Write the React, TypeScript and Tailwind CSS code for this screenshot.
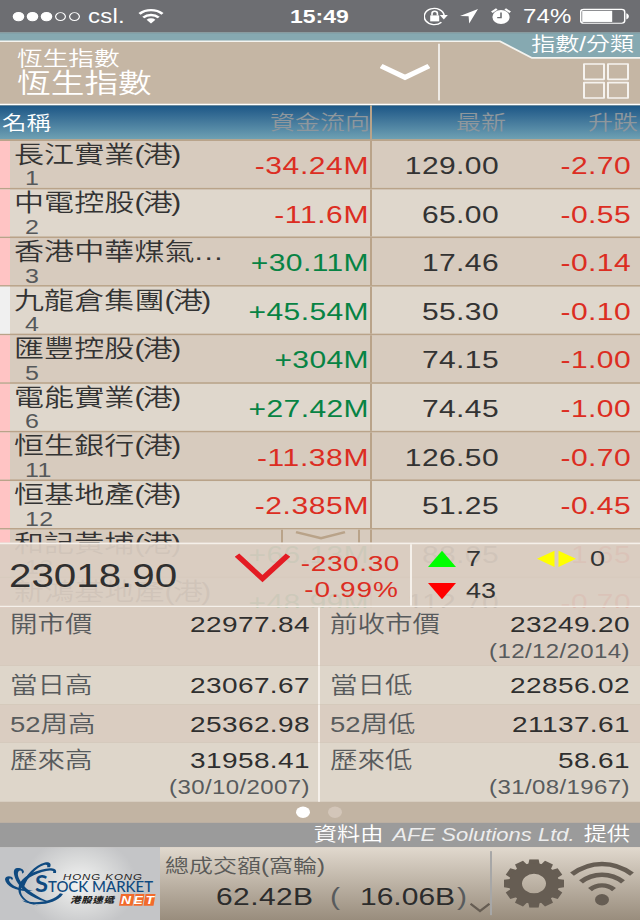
import clsx from 'clsx';

type Stock = {
  name: string;
  suffix: string;
  code: string;
  flow: string;
  last: string;
  change: string;
  plain?: boolean;
};

const stocks: Stock[] = [
  { name: '長江實業', suffix: '(港)', code: '1', flow: '-34.24M', last: '129.00', change: '-2.70' },
  { name: '中電控股', suffix: '(港)', code: '2', flow: '-11.6M', last: '65.00', change: '-0.55' },
  { name: '香港中華煤氣', suffix: '...', code: '3', flow: '+30.11M', last: '17.46', change: '-0.14' },
  { name: '九龍倉集團', suffix: '(港)', code: '4', flow: '+45.54M', last: '55.30', change: '-0.10', plain: true },
  { name: '匯豐控股', suffix: '(港)', code: '5', flow: '+304M', last: '74.15', change: '-1.00' },
  { name: '電能實業', suffix: '(港)', code: '6', flow: '+27.42M', last: '74.45', change: '-1.00' },
  { name: '恒生銀行', suffix: '(港)', code: '11', flow: '-11.38M', last: '126.50', change: '-0.70' },
  { name: '恒基地產', suffix: '(港)', code: '12', flow: '-2.385M', last: '51.25', change: '-0.45' },
  { name: '和記黃埔', suffix: '(港)', code: '13', flow: '+66.13M', last: '88.05', change: '-1.65' },
  { name: '新鴻基地產', suffix: '(港)', code: '16', flow: '+48.99M', last: '112.70', change: '-0.70' },
];

const stats = [
  { h: 'h-[72px] pt-[7px]', bg: 'bg-[#dacdc1]', left: ['開市價', '22977.84'], right: ['前收市價', '23249.20', '(12/12/2014)'] },
  { h: 'h-[48px] pt-[11px]', bg: 'bg-[#ded6ca]', left: ['當日高', '23067.67'], right: ['當日低', '22856.02'] },
  { h: 'h-[47px] pt-[11px]', bg: 'bg-[#dacdc1]', left: ['52周高', '25362.98'], right: ['52周低', '21137.61'] },
  { h: 'h-[73px] pt-[8px]', bg: 'bg-[#ded6ca]', left: ['歷來高', '31958.41', '(30/10/2007)'], right: ['歷來低', '58.61', '(31/08/1967)'] },
];

const StatusBar = () => (
  <div className="flex h-10 items-center bg-[#6d6e72] text-[24px] leading-none text-white">
    <svg className="ml-3 h-5 w-[70px]" viewBox="0 0 70 20" fill="none" stroke="#fff" strokeWidth="1.2">
      <circle cx="6.5" cy="10.5" r="5.2" fill="#fff" />
      <circle cx="20.5" cy="10.5" r="5.2" fill="#fff" />
      <circle cx="34.5" cy="10.5" r="5.2" fill="#fff" />
      <circle cx="48.5" cy="10.5" r="4.9" />
      <circle cx="62.5" cy="10.5" r="4.9" />
    </svg>
    <span className="ml-[6px] mt-[2px] w-[38px] tracking-[0.2px]">csl.</span>
    <svg className="ml-[12px] h-5 w-[26px]" viewBox="0 0 26 20" fill="none" stroke="#fff" strokeWidth="3">
      <path d="M1.5 7.2a16.5 16.5 0 0 1 23 0" />
      <path d="M5.3 11.6a11 11 0 0 1 15.4 0" />
      <path d="M13 19l-4.4-4.6a6.3 6.3 0 0 1 8.8 0z" fill="#fff" stroke="none" />
    </svg>
    <span className="ml-[126px] mt-[2px] w-[60px] text-[23px] font-bold">15:49</span>
    <svg className="ml-[74px] h-[26px] w-[24px]" viewBox="0 0 24 26" fill="none" stroke="#fff" strokeWidth="1.6">
      <path d="M17.4 20.4a10 10 0 1 1 2.8-8.2" />
      <path d="M15.8 11.5h8l-4 5.5z" fill="#fff" stroke="none" />
      <rect x="6.2" y="12" width="9" height="7.4" fill="#fff" stroke="none" />
      <path d="M8 12v-2.4a2.7 2.7 0 0 1 5.4 0V12" />
    </svg>
    <svg className="ml-[12px] h-5 w-[18px]" viewBox="0 0 18 20">
      <path d="M18 1L0 9.8l8.6.4L9.2 19z" fill="#fff" />
    </svg>
    <svg className="ml-[13px] h-[22px] w-[20px]" viewBox="0 0 20 22">
      <circle cx="10" cy="12" r="8.6" fill="#fff" />
      <path d="M.8 6.2l5-4.2M19.2 6.2l-5-4.2" stroke="#fff" strokeWidth="2.4" />
      <path d="M10 6.5V12.8H6.2" stroke="#6d6e72" strokeWidth="1.6" fill="none" />
    </svg>
    <span className="ml-[12px] mt-[2px] w-[50px] tracking-[0.2px]">74%</span>
    <svg className="ml-[7px] h-[20px] w-[50px]" viewBox="0 0 50 20">
      <rect x=".7" y="1.7" width="44" height="17" rx="3" fill="none" stroke="#fff" strokeWidth="1.5" />
      <rect x="2.2" y="3.3" width="30" height="13.8" fill="#fff" />
      <path d="M46.3 6.5c3.4 1 3.4 6.5 0 7.5z" fill="#fff" />
    </svg>
  </div>
);

const Header = () => (
  <div className="relative h-[90px] bg-[#86a9b1] text-white">
    <svg className="absolute inset-0 h-[90px] w-[640px]" viewBox="0 0 640 90" fill="none" stroke="#fff">
      <path d="M0 11h500l32 20.5h108V90H0z" fill="#c5b6a4" stroke="none" />
      <path d="M0 11h500l32 20.5h108" strokeWidth="2" stroke="#f4f4f0" />
      <path d="M0 .5h640" stroke="#7a9299" />
      <path d="M0 89h640" strokeWidth="2" />
    </svg>
    <div className="relative flex h-full">
      <div className="flex w-[380px] shrink-0 flex-col pl-[17px] pt-[20px] leading-none">
        <span className="text-[25.7px]">恆生指數</span>
        <span className="mt-px text-[33.7px]">恆生指數</span>
      </div>
      <svg className="mt-[38px] h-[24px] w-[50px]" viewBox="0 0 50 24" fill="none" stroke="#fff" strokeWidth="6">
        <path d="M1 3.5L25 17.5L49 3.5" />
      </svg>
      <div className="ml-2 mt-[14px] h-[70px] w-[2px] bg-[#efebe6]" />
      <div className="flex flex-1 flex-col items-end">
        <span className="mr-[6px] mt-[3px] text-[24px] leading-none">指數/分類</span>
        <div className="mr-[11px] mt-[11px] grid grid-cols-2 gap-[2px]">
          {[0, 1, 2, 3].map((i) => (
            <div key={i} className="h-[21px] w-[22px] rounded-[1px] border-2 border-[#f6f3ef]" />
          ))}
        </div>
      </div>
    </div>
  </div>
);

const TableHead = () => (
  <div className="flex h-[42px] items-center bg-linear-to-b from-[#1b5686] to-[#6fa1b3] text-[25px] leading-none text-[#8e979d]">
    <span className="mt-[3px] w-[171px] pl-[2px] text-[24.5px] text-white">名稱</span>
    <span className="flex w-[201px] items-center justify-end self-stretch border-r-2 border-[#b9a389] pt-[3px]">
      資金流向
    </span>
    <span className="mt-[3px] w-[134px] text-right">最新</span>
    <span className="mt-[3px] w-[132px] text-right">升跌</span>
  </div>
);

const StockRow = ({ stock, odd }: { stock: Stock; odd: boolean }) => {
  const falling = stock.flow.startsWith('-');
  return (
    <div
      className={clsx(
        'flex h-[60px] shrink-0 items-center border-b-2 border-[#b9a389] text-[30px] leading-none tracking-[0.4px]',
        odd ? 'bg-[#d7cbbe]' : 'bg-[#dfd7cc]',
      )}
    >
      <div className={clsx('w-[10px] self-stretch', stock.plain ? 'bg-[#f0f0f0]' : 'bg-[#ffc4c4]')} />
      <div className="w-[225px] self-stretch pl-[4px] pt-[2px] text-[#333]">
        <div className="whitespace-nowrap tracking-[0.1px]">
          {stock.name}
          <span className={stock.suffix === '...' ? 'tracking-[1.5px]' : 'tracking-[-1.6px]'}>{stock.suffix}</span>
        </div>
        <div className="mt-[2px] pl-[11px] text-[25px] leading-[24px] text-[#55585a]">{stock.code}</div>
      </div>
      <div
        className={clsx(
          'flex w-[137px] items-center justify-end self-stretch border-r-2 border-[#b9a389] pr-px pt-[3px]',
          falling ? 'tracking-[0.6px] text-[#dc2d22]' : 'text-[#078344]',
        )}
      >
        {stock.flow}
      </div>
      <div className="mt-[3px] w-[127px] text-right text-[#333]">{stock.last}</div>
      <div className="mt-[3px] w-[132px] text-right text-[#dc2d22]">{stock.change}</div>
    </div>
  );
};

const IndexPanel = () => (
  <div className="absolute inset-x-0 bottom-0 flex h-[80px] border-y-2 border-[#f5f0ea] bg-[#dacdc1]/94 leading-none">
    <div className="flex w-[235px] items-center pl-[9px] pt-[5px] text-[40.3px] text-[#2f2f2f]">23018.90</div>
    <svg className="mt-[10px] h-[40px] w-[55px]" viewBox="0 0 55 40" fill="none" stroke="#e31b23" strokeWidth="6">
      <path d="M2 3.5L27.5 32.5L53 3.5" />
    </svg>
    <div className="flex w-[120px] flex-col items-end pr-[10px] pt-[10px] text-[28px] tracking-[0.6px] text-[#dc2d22]">
      <span>-230.30</span>
      <span className="mr-px mt-[4px] tracking-[1px]">-0.99%</span>
    </div>
    <div className="flex flex-1 border-l-2 border-[#f5f0ea] pt-[2px] text-[27px] text-[#333]">
      <div className="flex w-[125px] flex-col gap-[8px] pl-[16px]">
        <div className="flex h-[32px] items-center gap-[10px]">
          <svg className="h-[20px] w-[28px]" viewBox="0 0 28 20">
            <path d="M14 0L28 20H0z" fill="#0f0" />
          </svg>
          7
        </div>
        <div className="flex h-[32px] items-center gap-[10px]">
          <svg className="h-[20px] w-[28px]" viewBox="0 0 28 20">
            <path d="M0 0H28L14 20z" fill="#f00" />
          </svg>
          43
        </div>
      </div>
      <div className="flex h-[32px] items-center gap-[14px]">
        <svg className="h-[20px] w-[39px]" viewBox="0 0 39 20" fill="#ff0">
          <path d="M17.5 0V20L0 10zM21.5 0V20L39 10z" />
        </svg>
        0
      </div>
    </div>
  </div>
);

const StatCell = ({ cell }: { cell: string[] }) => {
  const [label, value, date] = cell;
  return (
    <div className="flex justify-between px-[10px] leading-[28px]">
      <span className="text-[27.5px] text-[#585b5d]">{label}</span>
      <span className="flex flex-col items-end text-[28px] tracking-[0.4px] text-[#2f2f2f]">
        {value}
        {date && <span className="mt-[6px] text-[24px] text-[#585b5d]">{date}</span>}
      </span>
    </div>
  );
};

const Logo = () => (
  <div className="h-[90px] w-[160px] bg-[radial-gradient(circle_at_50%_50%,#f3f3f3_0,#dcdddd_30%,#c4c5c7_62%)]">
    <svg className="h-[90px] w-[160px]" viewBox="0 0 160 90">
      <g fill="#0f4a80">
        <path d="M50 25C52 20 49 18 45 19C35 22 25 35 22 48L24 49C28 36 36 25 44 22C47 21 48 22 47 25z" />
        <path d="M56 32C57 27 54 26 50 26C39 27 23 34 19 47C16 60 25 70 38 72C25 67 18 58 22 48C26 37 40 30 50 29C53 29 54 30 53 32z" />
        <path d="M24 31C24 27 20 25 16 26C12 28 14 37 18 45C24 57 36 66 50 68C38 62 26 53 21 43C17 36 17 30 20 29C22 29 22 31 22 33z" />
        <path d="M13 39C12 35 5 35 5 40C6 50 22 57 33 53C22 54 11 48 9 41C9 38 11 38 12 41z" />
        <path d="M22 66C32 74 56 72 63 58L60 57C54 66 38 71 22 66z" />
      </g>
      <text x="63" y="41" fontSize="11.5" fontStyle="italic" textLength="79" fill="#222">HONG KONG</text>
      <g fill="#0f4a80" fontFamily="Lato, 'Liberation Sans', sans-serif">
        <text x="35" y="56" fontSize="27" fontWeight="700" textLength="13" lengthAdjust="spacingAndGlyphs">S</text>
        <text x="48" y="56" fontSize="18" fontWeight="500" textLength="105" lengthAdjust="spacingAndGlyphs">TOCK MARKET</text>
      </g>
      <text x="70" y="69.5" fontSize="10.5" fontStyle="italic" fontWeight="900" textLength="44" fill="#222">港股速遞</text>
      <path d="M121 58h13.5l-2 14.500h-13.5zM135.5 58h9l-2 14.500h-9zM145.5 58h10l-2 14.500h-10z" fill="#f26a2b" />
      <text x="121" y="70.500" fontSize="14" fontStyle="italic" fontWeight="700" textLength="33" fill="#fff">NET</text>
    </svg>
  </div>
);

const Gear = () => (
  <svg className="h-[60px] w-[60px]" viewBox="-30 -30 60 60" fill="#665d53">
    {Array.from({ length: 12 }, (_, i) => (
      <path key={i} d="M-6 -22L-4.6 -30H4.6L6 -22z" transform={`rotate(${i * 30})`} />
    ))}
    <circle r="18.5" fill="none" stroke="#665d53" strokeWidth="13" />
  </svg>
);

const Signal = () => (
  <svg className="h-[60px] w-[64px]" viewBox="0 0 64 60" fill="none" stroke="#665d53" strokeWidth="5.5">
    <path d="M2 18.5C20 1.5 44 1.5 62 18.5" />
    <path d="M11 28C23 16 41 16 53 28" />
    <path d="M20 37.5C27 30.5 37 30.5 44 37.5" />
    <circle cx="32" cy="50" r="7" fill="#665d53" stroke="none" />
  </svg>
);

const Footer = () => (
  <div className="flex h-[90px] leading-none">
    <Logo />
    <div className="flex flex-1 bg-linear-to-b from-[#e1d9ce] to-[#998d7d]">
      <div className="w-[310px] pt-[12px]">
        <div className="pl-[5px] text-[24px] text-[#5a5a58]">總成交額(窩輪)</div>
        <div className="mt-[10px] flex text-[30px] text-[#2c2c2c]">
          <span className="w-[170px] pl-[56px] tracking-[0.4px]">62.42B</span>
          <span className="w-[30px] text-[#585b5d]">(</span>
          <span className="w-[98px]">16.06B</span>
          <span className="-ml-px text-[#585b5d]">)</span>
        </div>
      </div>
      <svg className="mt-[66px] h-4 w-[20px]" viewBox="0 0 20 16" fill="none" stroke="#665d53" strokeWidth="2.5">
        <path d="M.5 4L10 13L19.5 4" />
      </svg>
      <div className="mt-[5px] h-[79px] w-[2px] bg-[#a7a7a7]" />
      <div className="flex gap-[6px] pl-[12px] pt-[15px]">
        <Gear />
        <Signal />
      </div>
    </div>
  </div>
);

export default function App() {
  return (
    <div className="h-[920px] w-[640px] overflow-hidden">
      {/* 640x1136 phone screen, squeezed vertically into 920px */}
      <div className="flex h-[1136px] w-[640px] origin-top scale-y-[0.80986] flex-col bg-[#c2b4a3] font-['Liberation_Sans','Noto_Sans_CJK_TC',sans-serif] font-[350]">
        <StatusBar />
        <Header />
        <TableHead />

        {/* Stock list with the index panel floating over its bottom */}
        <div className="relative h-[578px] overflow-hidden border-t-2 border-[#b9a389]">
          <div className="flex flex-col">
            {stocks.map((stock, i) => (
              <StockRow key={stock.code} stock={stock} odd={i % 2 === 0} />
            ))}
          </div>
          <div className="absolute left-[281px] top-[480px] h-[20px] w-[79px] border-x-2 border-[#b9a389] bg-[#d7cbbe]">
            <svg className="h-[16px] w-[75px]" viewBox="0 0 75 16" fill="none" stroke="#b9a389" strokeWidth="3">
              <path d="M13 3L38 10.5L62 3" />
            </svg>
          </div>
          <IndexPanel />
        </div>

        {/* Index statistics */}
        <div>
          {stats.map((row) => (
            <div key={row.left[0]} className={clsx('relative grid grid-cols-2', row.h, row.bg)}>
              <StatCell cell={row.left} />
              <StatCell cell={row.right} />
              <div className="absolute inset-y-0 left-[318px] w-[2px] bg-[#f5f0ea]" />
            </div>
          ))}
        </div>

        <div className="flex h-[26px] items-center justify-center gap-[18px] pr-[2px]">
          <div className="size-[14px] rounded-full bg-white" />
          <div className="size-[14px] rounded-full bg-[#d3c6b9]" />
        </div>

        <div className="flex h-[30px] items-center justify-end bg-[#9b9b9b] pr-[10px] pt-px text-[23.2px] leading-none text-white">
          <span>資料由</span>
          <span className="mx-[9px] text-[22px] italic text-[#ededed]">AFE Solutions Ltd.</span>
          <span>提供</span>
        </div>

        <Footer />
      </div>
    </div>
  );
}
